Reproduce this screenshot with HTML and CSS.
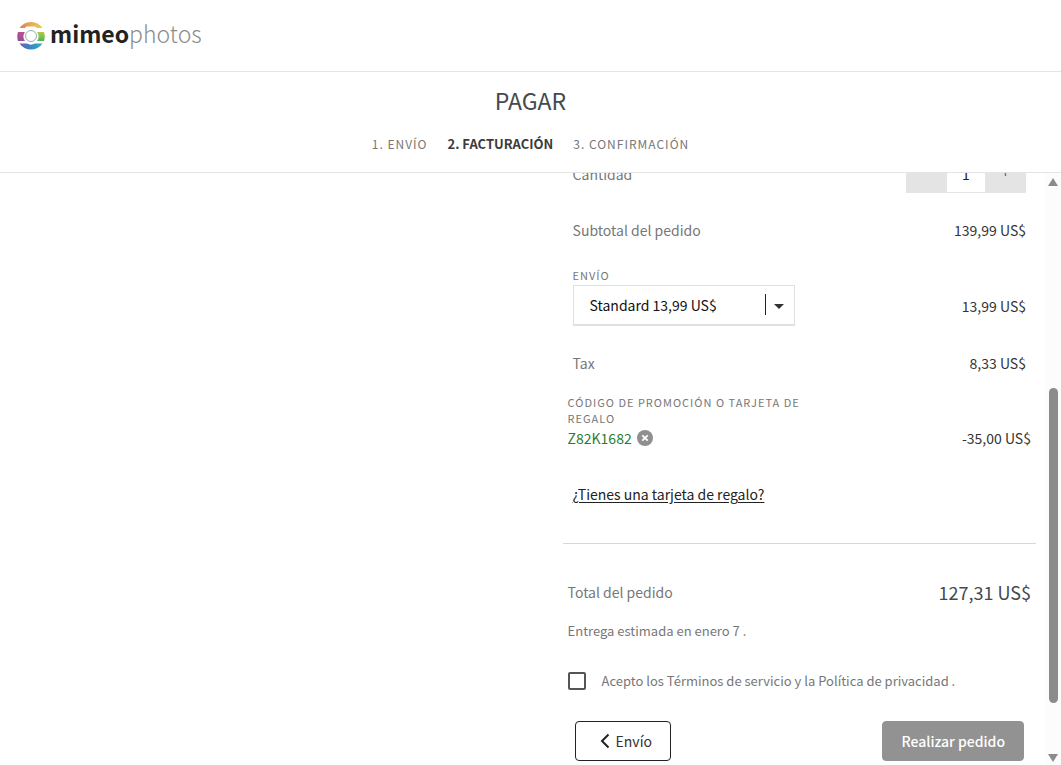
FILE: index.html
```html
<!DOCTYPE html>
<html lang="es">
<head>
    <meta charset="UTF-8">
    <meta name="viewport" content="width=device-width, initial-scale=1.0">
    <title>Pagar - Mimeo Photos</title>
    <link rel="stylesheet" href="styles.css">
</head>
<body>
    <header class="site-header">
        <a href="#" class="logo">
            <svg class="logo-icon" viewBox="0 0 28 28" width="28" height="28" aria-hidden="true">
                <defs>
                    <linearGradient id="top" x1="0" x2="1" y1="0" y2="0">
                        <stop offset="0" stop-color="#dd7d5a"/>
                        <stop offset="0.5" stop-color="#e8ac50"/>
                        <stop offset="1" stop-color="#e0cf58"/>
                    </linearGradient>
                    <linearGradient id="bottom" x1="0" x2="1" y1="0" y2="0">
                        <stop offset="0" stop-color="#6a5cae"/>
                        <stop offset="0.5" stop-color="#3a88c4"/>
                        <stop offset="1" stop-color="#2fb0b8"/>
                    </linearGradient>
                    <linearGradient id="right" x1="0" x2="0" y1="0" y2="1">
                        <stop offset="0" stop-color="#b0cc3c"/>
                        <stop offset="1" stop-color="#55b060"/>
                    </linearGradient>
                    <linearGradient id="left" x1="0" x2="0" y1="0" y2="1">
                        <stop offset="0" stop-color="#bb5088"/>
                        <stop offset="1" stop-color="#93509f"/>
                    </linearGradient>
                </defs>
                <path fill="url(#top)" d="M2.500 6A14 14 0 0 1 25.500 6H20L18.500 4.500H9.500L8 6Z"/>
                <path fill="url(#left)" d="M1 10H8A7 7 0 0 0 8 19H1A14 14 0 0 1 1 10Z"/>
                <path fill="url(#right)" d="M27 10H20A7 7 0 0 1 20 19H27A14 14 0 0 0 27 10Z"/>
                <path fill="url(#bottom)" d="M2.500 21.500H10A8 8 0 0 0 18 21.500H25.500A14 14 0 0 1 2.500 21.500Z"/>
                <circle cx="14" cy="14" r="5.500" fill="none" stroke="#8fb0b4" stroke-width="1"/>
            </svg>
            <span class="logo-text"><b>mimeo</b><span>photos</span></span>
        </a>
    </header>

    <section class="checkout-header">
        <h1>PAGAR</h1>
        <ol class="steps">
            <li>1. ENVÍO</li>
            <li class="active">2. FACTURACIÓN</li>
            <li>3. CONFIRMACIÓN</li>
        </ol>
    </section>

    <main class="checkout">
        <form class="summary">
            <div class="row">
                <label for="quantity">Cantidad</label>
                <div class="stepper">
                    <button type="button" aria-label="Menos">−</button>
                    <input type="text" id="quantity" value="1">
                    <button type="button" aria-label="Más">+</button>
                </div>
            </div>
            <div class="row">
                <span>Subtotal del pedido</span>
                <span class="amount">139,99 US$</span>
            </div>
            <div class="row shipping">
                <div class="field">
                    <label for="shipping" class="small-label">ENVÍO</label>
                    <div class="select-box">
                        <select id="shipping">
                            <option>Standard 13,99 US$</option>
                        </select>
                        <span class="select-arrow"></span>
                    </div>
                </div>
                <span class="amount">13,99 US$</span>
            </div>
            <div class="row">
                <span>Tax</span>
                <span class="amount">8,33 US$</span>
            </div>
            <div class="row wide promo">
                <div class="promo-info">
                    <div class="small-label">CÓDIGO DE PROMOCIÓN O TARJETA DE REGALO</div>
                    <div class="promo-code">
                        <span>Z82K1682</span>
                        <button type="button" class="remove" aria-label="Quitar código">
                            <svg viewBox="0 0 16 16" width="16" height="16">
                                <circle cx="8" cy="8" r="8" fill="#8f8f8f"/>
                                <path d="M5.300 5.300L10.700 10.700M10.700 5.300L5.300 10.700" stroke="#fff" stroke-width="1.800"/>
                            </svg>
                        </button>
                    </div>
                </div>
                <span class="amount">-35,00 US$</span>
            </div>
            <div class="row gift">
                <a href="#">¿Tienes una tarjeta de regalo?</a>
            </div>
            <hr>
            <div class="row wide total">
                <span>Total del pedido</span>
                <span class="total-amount">127,31 US$</span>
            </div>
            <p class="delivery">Entrega estimada en enero 7 .</p>
            <div class="terms">
                <input type="checkbox" id="terms">
                <label for="terms">Acepto los Términos de servicio y la Política de privacidad .</label>
            </div>
            <div class="actions">
                <button type="button" class="btn btn-back">
                    <svg viewBox="0 0 10 16" width="10" height="16" aria-hidden="true">
                        <path d="M8.500 1.500L2 8L8.500 14.500" fill="none" stroke="#222" stroke-width="2"/>
                    </svg>
                    Envío
                </button>
                <button type="submit" class="btn btn-submit">Realizar pedido</button>
            </div>
        </form>
        <div class="scrollbar">
            <span class="arrow-up"></span>
            <div class="track"><div class="thumb"></div></div>
            <span class="arrow-down"></span>
        </div>
    </main>
</body>
</html>
```

FILE: styles.css
```css
* {
    box-sizing: border-box;
}

body {
    margin: 0;
    height: 100vh;
    display: flex;
    flex-direction: column;
    overflow: hidden;
    background-color: #fff;
    color: #777;
    font-family: "Noto Sans CJK SC", "Open Sans", sans-serif;
    font-size: 14px;
    line-height: 24px;
}

button,
input,
select {
    font: inherit;
    color: inherit;
}

button {
    cursor: pointer;
}

.site-header {
    height: 72px;
    flex: none;
    display: flex;
    align-items: center;
    padding: 0 17px;
    border-bottom: 1px solid #e4e4e4;
}

.logo {
    display: flex;
    align-items: center;
    gap: 5px;
    color: #222;
    text-decoration: none;
}

.logo-text {
    padding-bottom: 6px;
    font-size: 23px;
    line-height: 32px;
}

.logo-text span {
    font-weight: 300;
    color: #8c8c8c;
}

.checkout-header {
    flex: none;
    padding: 10px 0 16px;
    border-bottom: 1px solid #e4e4e4;
    text-align: center;
}

.checkout-header h1 {
    margin: 0 0 14px;
    font-size: 23px;
    font-weight: normal;
    line-height: 36px;
    color: #444a4f;
}

.steps {
    display: flex;
    justify-content: center;
    gap: 20px;
    margin: 0;
    padding: 0;
    list-style: none;
    font-size: 12px;
    letter-spacing: 1px;
}

.steps .active {
    font-size: 13px;
    font-weight: bold;
    color: #3c3c3c;
    letter-spacing: 0;
}

.checkout {
    flex: 1;
    min-height: 0;
    display: flex;
    overflow: hidden;
}

/* the summary is kept at its end, the first rows slide under the header */
.summary {
    width: calc(45% - 4px);
    margin: 0 9px 0 auto;
    padding-bottom: 4px;
    display: flex;
    flex-direction: column;
    justify-content: flex-end;
}

.row {
    flex: none;
    display: flex;
    justify-content: space-between;
    align-items: center;
    margin-bottom: 25px;
    padding: 0 10px;
}

.row.wide {
    padding: 0 5px;
}

.amount {
    color: #333;
}

.stepper {
    display: flex;
    width: 120px;
    height: 38px;
    border-bottom: 1px solid #e4e4e4;
}

.stepper button {
    flex: 1;
    padding: 0 0 4px;
    border: none;
    background-color: #e4e4e4;
    color: #555;
}

.stepper input {
    width: 38px;
    padding: 0;
    border: none;
    text-align: center;
    color: #222;
}

.small-label {
    display: block;
    font-size: 11px;
    line-height: 16px;
    letter-spacing: 1px;
}

.row.shipping,
.row.promo {
    align-items: flex-end;
}

.shipping .amount {
    line-height: 40px;
}

.field {
    display: flex;
    flex-direction: column;
    gap: 2px;
}

.select-box {
    position: relative;
    width: 222px;
}

.select-box select {
    display: block;
    width: 100%;
    height: 41px;
    padding: 0 16px;
    border: 1px solid #e0e0e0;
    border-bottom-width: 2px;
    border-radius: 0;
    background-color: #fff;
    color: #111;
    appearance: none;
}

/* divider and caret laid over the select */
.select-arrow {
    position: absolute;
    top: 9px;
    right: 10px;
    width: 20px;
    height: 21px;
    border-left: 1px solid #222;
    pointer-events: none;
}

.select-arrow::after {
    content: "";
    position: absolute;
    top: 10px;
    right: 1px;
    border: 5px solid transparent;
    border-top-color: #333;
    border-bottom: none;
}

.row.promo {
    margin-top: -6px;
    margin-bottom: 32px;
}

.promo-info {
    width: 250px;
}

.promo-code {
    display: flex;
    align-items: center;
    gap: 5px;
    color: #2c7d2c;
}

.remove {
    display: flex;
    padding: 0;
    border: none;
    background: none;
}

.row.gift {
    margin-bottom: 37px;
}

.gift a {
    color: #222;
    text-underline-offset: 2px;
}

hr {
    width: 100%;
    margin: 0 0 36px;
    border: none;
    border-top: 1px solid #d8d8d8;
}

.row.total {
    margin-bottom: 17px;
}

.total-amount {
    font-size: 18px;
    color: #444a4f;
}

.delivery {
    margin: 0 0 30px;
    padding: 0 5px;
    font-size: 13px;
    line-height: 20px;
}

.terms {
    display: flex;
    align-items: center;
    gap: 16px;
    margin-bottom: 30px;
    padding: 0 5px;
    font-size: 13px;
    line-height: 20px;
}

.terms input {
    width: 18px;
    height: 18px;
    margin: 0;
    border: 2px solid #555;
    border-radius: 2px;
    appearance: none;
}

.terms input:checked {
    background-color: #555;
}

.actions {
    display: flex;
    justify-content: space-between;
    padding: 0 12px;
}

.btn {
    display: flex;
    align-items: center;
    justify-content: center;
    gap: 6px;
    height: 40px;
    padding: 0 18px;
    border: 1px solid #222;
    border-radius: 4px;
    background-color: #fff;
    color: #333;
}

.btn-back {
    padding-left: 24px;
}

.btn-submit {
    border-color: #929292;
    background-color: #929292;
    color: #fff;
    font-weight: 500;
}

.scrollbar {
    width: 16px;
    padding: 5px 0 3px;
    display: flex;
    flex-direction: column;
    align-items: center;
    background-color: #fcfcfc;
}

.track {
    flex: 1;
    display: flex;
    align-items: flex-end;
    padding-bottom: 51px;
}

.thumb {
    width: 9px;
    height: 61%;
    border-radius: 5px;
    background-color: #8b8b8b;
}

.arrow-up,
.arrow-down {
    border: 5px solid transparent;
}

.arrow-up {
    border-top: none;
    border-bottom: 8px solid #8b8b8b;
}

.arrow-down {
    border-bottom: none;
    border-top: 8px solid #8b8b8b;
}
```
